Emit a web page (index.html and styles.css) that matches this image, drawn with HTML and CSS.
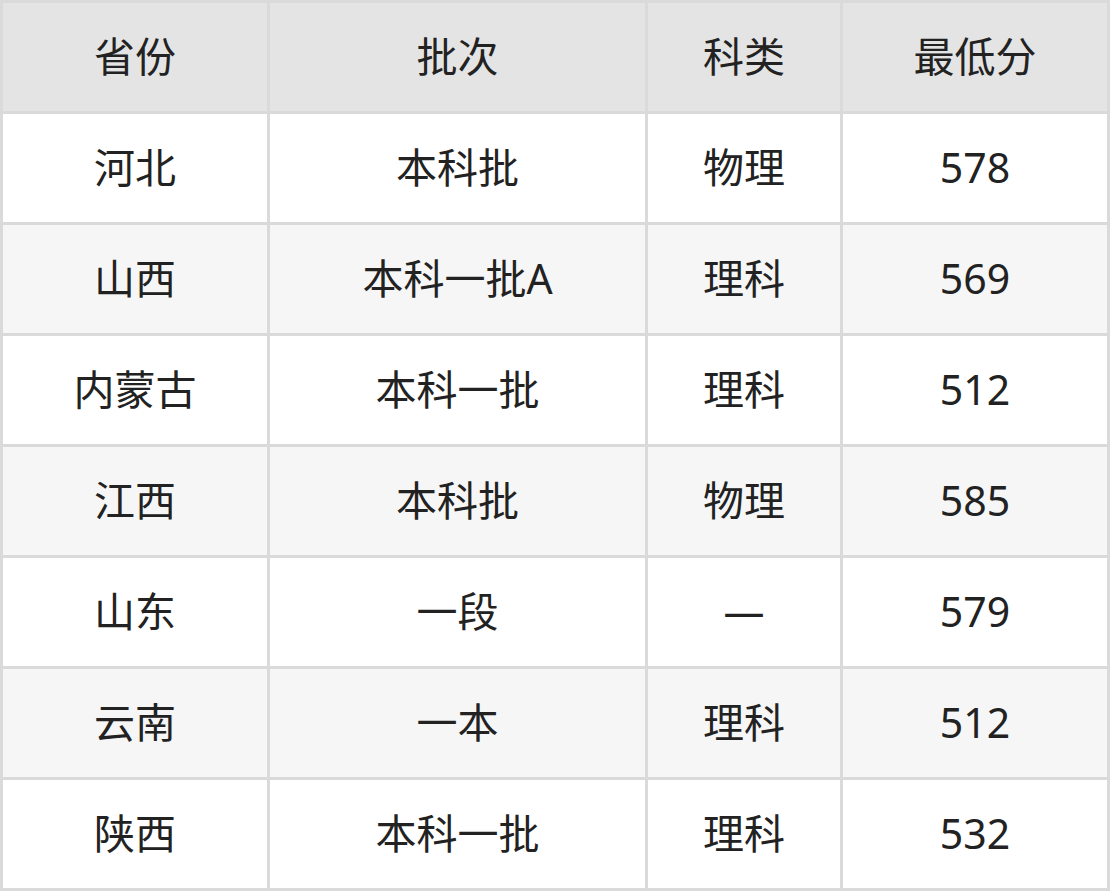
FILE: index.html
```html
<!DOCTYPE html>
<html lang="zh-CN">
<head>
<meta charset="utf-8">
<title>最低分</title>
<link rel="stylesheet" href="styles.css">
</head>
<body>
<table class="score-table">
  <colgroup>
    <col class="c-prov">
    <col class="c-batch">
    <col class="c-type">
    <col class="c-score">
  </colgroup>
  <thead>
    <tr><th>省份</th><th>批次</th><th>科类</th><th>最低分</th></tr>
  </thead>
  <tbody>
    <tr><td>河北</td><td>本科批</td><td>物理</td><td>578</td></tr>
    <tr><td>山西</td><td>本科一批A</td><td>理科</td><td>569</td></tr>
    <tr><td>内蒙古</td><td>本科一批</td><td>理科</td><td>512</td></tr>
    <tr><td>江西</td><td>本科批</td><td>物理</td><td>585</td></tr>
    <tr><td>山东</td><td>一段</td><td>—</td><td>579</td></tr>
    <tr><td>云南</td><td>一本</td><td>理科</td><td>512</td></tr>
    <tr><td>陕西</td><td>本科一批</td><td>理科</td><td>532</td></tr>
  </tbody>
</table>
</body>
</html>
```
FILE: styles.css
```css
html, body {
  margin: 0;
  padding: 0;
  background: #ffffff;
}

.score-table {
  table-layout: fixed;
  width: 1110px;
  border-collapse: separate;
  border-spacing: 3px;
  background: #dadada;
  font-family: "Noto Sans", "Noto Sans CJK SC", sans-serif;
  font-size: 41px;
  line-height: 1.2;
  color: #222222;
}

.c-prov { width: 264px; }
.c-batch { width: 375px; }
.c-type { width: 192px; }
.c-score { width: 264px; }

.score-table th,
.score-table td {
  height: 108px;
  box-sizing: border-box;
  padding: 0 0 1px;
  text-align: center;
  vertical-align: middle;
  font-weight: 400;
}

.score-table th {
  background: #e4e4e4;
}

.score-table tbody tr:nth-child(odd) td {
  background: #ffffff;
}

.score-table tbody tr:nth-child(even) td {
  background: #f6f6f6;
}
```
